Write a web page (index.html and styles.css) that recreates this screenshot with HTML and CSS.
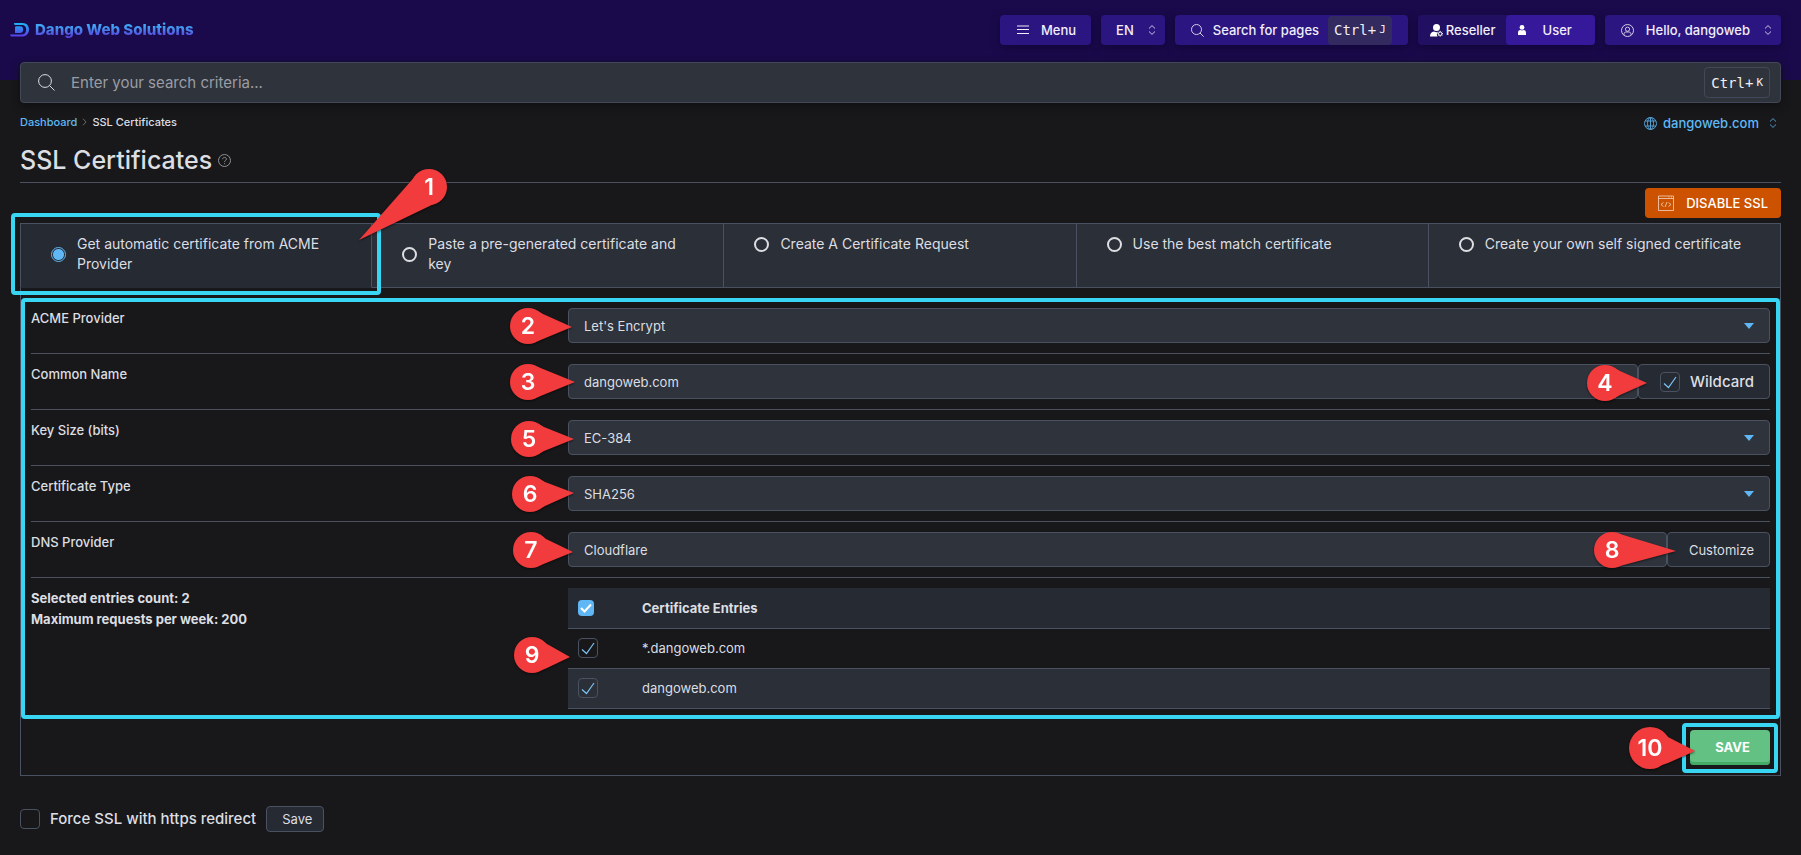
FILE: index.html
```html
<!DOCTYPE html>
<html lang="en">
<head>
<meta charset="utf-8">
<meta name="viewport" content="width=device-width, initial-scale=1">
<title>SSL Certificates</title>
<link rel="stylesheet" href="styles.css">
</head>
<body>
<header class="topbar">
  <a class="brand" href="#">
    <svg class="brand-mark" viewBox="0 0 19 14" aria-hidden="true">
      <defs><linearGradient id="mark" x1="0" y1="0" x2="0" y2="1"><stop offset="0" stop-color="#1cb6f6"/><stop offset="1" stop-color="#5a3de8"/></linearGradient></defs>
      <path fill="url(#mark)" d="M4 0h8.500c4 0 6.500 2.800 6.500 6.400 0 4-2.800 7.100-7 7.100H1L0 11.500h11.500c3 0 4.700-2 4.700-5C16.200 3.800 14.700 2 12 2H4.500zM5.500 3.200H10c2 0 3.200 1.200 3.200 3.200 0 2.300-1.300 3.600-3.400 3.600H5V5z"/>
    </svg>
    <span class="brand-name">Dango Web Solutions</span>
  </a>
  <nav class="tools" aria-label="Account">
    <button class="tool tool-menu" type="button">
      <svg class="icon12" viewBox="0 0 12 12"><path d="M0 2h12M0 5.500h12M0 9.500h12"/></svg>Menu
    </button>
    <button class="tool tool-lang" type="button">EN
      <svg class="updown" viewBox="0 0 8 10"><path d="M1 3.500 4 .6l3 2.900M1 6.500l3 2.900 3-2.900"/></svg>
    </button>
    <button class="tool tool-search" type="button">
      <svg class="icon13" viewBox="0 0 13 13"><circle cx="5.500" cy="5.500" r="5"/><path d="m9 9 3.700 3.700"/></svg>
      Search for pages <kbd class="keys">Ctrl+<small>J</small></kbd>
    </button>
    <div class="roles">
      <button class="role" type="button">
        <svg class="icon13 solid" viewBox="0 0 13 13"><circle cx="6.500" cy="3.500" r="3.500"/><path d="M0 12.500C0 9.500 1.500 8 4 7.600c1.500.8 3 .8 4.200.2-1.600 1.500-1.700 3.200-.7 4.700z"/><circle class="gear" cx="10.200" cy="9.700" r="1.700"/><path class="gear-teeth" d="M10.200 7.900v-1M10.200 12.600v-1M8.400 9.700h-1M13 9.700h-1M8.900 8.400l-.6-.6M12.100 11.600l-.6-.6M8.900 11l-.6.6M12.100 7.800l-.6.6"/></svg>Reseller
      </button>
      <button class="role role-active" type="button">
        <svg class="icon-user" viewBox="0 0 8 10"><circle cx="4" cy="2.400" r="2.400"/><path d="M0 10V8c0-2.400 1.200-3 2.500-3 1 .5 2 .5 3 0C6.800 5 8 5.600 8 8v2z"/></svg>User
      </button>
    </div>
    <button class="tool tool-account" type="button">
      <svg class="icon13" viewBox="0 0 13 13"><circle cx="6.500" cy="6.500" r="6"/><circle cx="6.500" cy="5.200" r="2.100"/><path d="M3 10.800V10c0-1.200 1-2 2.200-2h2.600C9 8 10 8.800 10 10v.8"/></svg>
      Hello, dangoweb
      <svg class="updown" viewBox="0 0 8 10"><path d="M1 3.500 4 .6l3 2.900M1 6.500l3 2.900 3-2.900"/></svg>
    </button>
  </nav>
</header>

<main class="page">
  <form class="search" role="search">
    <svg class="search-icon" viewBox="0 0 17 17" aria-hidden="true"><circle cx="7" cy="7" r="6.400"/><path d="m11.600 11.600 4.900 4.900"/></svg>
    <input class="search-input" type="search" placeholder="Enter your search criteria..." aria-label="Search">
    <kbd class="keys keys-outline">Ctrl+<small>K</small></kbd>
  </form>

  <div class="crumbs">
    <nav class="trail" aria-label="Breadcrumb">
      <a href="#">Dashboard</a>
      <svg class="crumb-sep" viewBox="0 0 5 8"><path d="m1 .7 3 3.300-3 3.300"/></svg>
      <span>SSL Certificates</span>
    </nav>
    <button class="domain" type="button">
      <svg class="icon13" viewBox="0 0 13 13"><circle cx="6.500" cy="6.500" r="6"/><ellipse cx="6.500" cy="6.500" rx="3" ry="6"/><path d="M1.200 4h10.600M1.200 9h10.600M6.500.5v12"/></svg>
      dangoweb.com
      <svg class="updown" viewBox="0 0 8 10"><path d="M1 3.500 4 .6l3 2.900M1 6.500l3 2.900 3-2.900"/></svg>
    </button>
  </div>

  <div class="heading">
    <h1>SSL Certificates</h1>
    <svg class="icon13 help" viewBox="0 0 13 13"><circle cx="6.500" cy="6.500" r="6"/><path d="M4.700 5.200c0-2.400 3.700-2.300 3.700-.1 0 1.400-1.800 1.300-1.800 2.800M6.600 9.200v1"/></svg>
  </div>
  <div class="actions">
    <button class="disable" type="button">
      <svg class="icon-code" viewBox="0 0 16 16"><path d="M.5 1h15v14.500H.5zM.5 3.500h15M10.500 2h1M13 2h1M5.500 7.500l-2.500 2 2.500 2M10.500 7.500l2.500 2-2.500 2M9 7l-2 5"/></svg>DISABLE SSL
    </button>
  </div>

  <form class="certificate">
    <div class="tabs">
      <label class="tab tab-active">
        <input class="radio" type="radio" name="source" checked><span>Get automatic certificate from ACME Provider</span>
        <i class="frame frame-tab"></i>
        <svg class="pin pin-1" viewBox="0 0 36 36"><circle cx="18" cy="18" r="18"/><path d="M7 4-52 71 29 32z"/><text x="18" y="26">1</text></svg>
      </label>
      <label class="tab"><input class="radio" type="radio" name="source"><span>Paste a pre-generated certificate and key</span></label>
      <label class="tab"><input class="radio" type="radio" name="source"><span>Create A Certificate Request</span></label>
      <label class="tab"><input class="radio" type="radio" name="source"><span>Use the best match certificate</span></label>
      <label class="tab"><input class="radio" type="radio" name="source"><span>Create your own self signed certificate</span></label>
    </div>

    <div class="panel">
      <div class="fields">
        <div class="row">
          <label for="provider">ACME Provider</label>
          <div class="field">
            <select class="control" id="provider"><option>Let's Encrypt</option></select>
            <svg class="pin pin-2" viewBox="0 0 36 36"><circle cx="18" cy="18" r="18"/><path d="M27 2.500 33 6 62 19 33 31 27 33.500z"/><text x="18" y="26">2</text></svg>
          </div>
        </div>
        <div class="row">
          <label for="common">Common Name</label>
          <div class="field">
            <input class="control" id="common" type="text" value="dangoweb.com">
            <label class="addon wildcard"><input class="check" type="checkbox" checked>Wildcard</label>
            <svg class="pin pin-2" viewBox="0 0 36 36"><circle cx="18" cy="18" r="18"/><path d="M27 2.500 33 5 65 18 33 31 27 33.500z"/><text x="18" y="26">3</text></svg>
            <svg class="pin pin-4" viewBox="0 0 36 36"><circle cx="18" cy="18" r="18"/><path d="M27 2.500 33 6 60 18 33 30 27 33.500z"/><text x="18" y="26">4</text></svg>
          </div>
        </div>
        <div class="row">
          <label for="size">Key Size (bits)</label>
          <div class="field">
            <select class="control" id="size"><option>EC-384</option></select>
            <svg class="pin pin-5" viewBox="0 0 36 36"><circle cx="18" cy="18" r="18"/><path d="M27 2.500 33 6 63 18 33 30 27 33.500z"/><text x="18" y="26">5</text></svg>
          </div>
        </div>
        <div class="row">
          <label for="type">Certificate Type</label>
          <div class="field">
            <select class="control" id="type"><option>SHA256</option></select>
            <svg class="pin pin-6" viewBox="0 0 36 36"><circle cx="18" cy="18" r="18"/><path d="M27 2.500 33 6 62 17 33 30 27 33.500z"/><text x="18" y="26">6</text></svg>
          </div>
        </div>
        <div class="row">
          <label for="dns">DNS Provider</label>
          <div class="field">
            <input class="control" id="dns" type="text" value="Cloudflare">
            <button class="addon" type="button">Customize</button>
            <svg class="pin pin-7" viewBox="0 0 36 36"><circle cx="18" cy="18" r="18"/><path d="M27 2.500 33 7 60 20 33 31 27 33.500z"/><text x="18" y="26">7</text></svg>
            <svg class="pin pin-8" viewBox="0 0 36 36"><circle cx="18" cy="18" r="18"/><path d="M26 2 82 19 26 34z"/><text x="18" y="26">8</text></svg>
          </div>
        </div>
        <div class="row">
          <div class="counts">
            <p>Selected entries count: 2</p>
            <p>Maximum requests per week: 200</p>
          </div>
          <div class="field">
            <table class="entries">
              <thead><tr><th class="pick"><input class="check-all" type="checkbox" checked aria-label="Select all"></th><th>Certificate Entries</th></tr></thead>
              <tbody>
                <tr><td><input class="check" id="e1" type="checkbox" checked></td><td><label for="e1">*.dangoweb.com</label></td></tr>
                <tr><td><input class="check" id="e2" type="checkbox" checked></td><td><label for="e2">dangoweb.com</label></td></tr>
              </tbody>
            </table>
            <svg class="pin pin-9" viewBox="0 0 36 36"><circle cx="18" cy="18" r="18"/><path d="M27 2.500 33 7 56 20 33 31 27 33.500z"/><text x="18" y="26">9</text></svg>
          </div>
        </div>
        <i class="frame frame-fields"></i>
      </div>
      <div class="submit">
        <div class="submit-box">
          <button class="save" type="submit">SAVE</button>
          <i class="frame frame-save"></i>
          <svg class="pin pin-10" viewBox="0 0 42 42"><circle cx="21" cy="21" r="21"/><path d="M33 4 39 10 66 24 39 36 33 38z"/><text x="21" y="29">10</text></svg>
        </div>
      </div>
    </div>
  </form>

  <form class="force">
    <label class="force-label"><input class="check" type="checkbox">Force SSL with https redirect</label>
    <button class="force-save" type="submit">Save</button>
  </form>
</main>
</body>
</html>
```
FILE: styles.css
```css
:root {
  --bg: #18181a;
  --line: #4a5161;
  --field: #2f333c;
  --raised: #2b2f38;
  --deep: #262a32;
  --text: #dcdee2;
  --blue: #5fb8f5;
  --cyan: #38d6f3;
}

* { box-sizing: border-box; }

body {
  margin: 0;
  background: var(--bg);
  color: var(--text);
  font: 14px/20px Inter, "Open Sans", sans-serif;
}

button, input, select { font: inherit; color: inherit; margin: 0; }
button { cursor: pointer; border: 0; padding: 0; background: none; }
a { color: var(--blue); text-decoration: none; }
p { margin: 0; }

svg { fill: none; stroke: currentColor; flex: none; overflow: visible; }
.icon12 { width: 12px; height: 12px; }
.icon13 { width: 13px; height: 13px; stroke-width: 1; opacity: .85; }
.updown { width: 8px; height: 10px; stroke-width: 1; opacity: .8; }

/* Top bar */
.topbar {
  display: flex;
  justify-content: space-between;
  align-items: flex-start;
  padding: 15px 20px 35px 10px;
  background: #1a0a4b;
}
.brand { display: flex; align-items: center; gap: 6px; height: 30px; }
.brand-mark { width: 19px; height: 14px; stroke: none; }
.brand-name {
  font-size: 15px;
  font-weight: 800;
  background: linear-gradient(#3fa6f5 30%, #5546dc 80%);
  background-clip: text;
  color: transparent;
}
.tools { display: flex; gap: 10px; }
.tool, .roles {
  display: flex;
  align-items: center;
  height: 30px;
  border-radius: 4px;
  color: #f1eefb;
  font-size: 13px;
  font-weight: 500;
  white-space: nowrap;
  box-shadow: 0 3px 8px #12063a;
}
.tool { background: #2b1580; }
.tool-menu { gap: 12px; padding: 0 15px 0 17px; }
.tool-lang { gap: 14px; padding: 0 9px 0 15px; }
.tool-search { gap: 9px; padding: 0 16px 0 16px; }
.tool-account { gap: 12px; padding: 0 9px 0 16px; }
.tool-account .updown { margin-left: 2px; }
.keys {
  display: inline-flex;
  align-items: center;
  gap: 3px;
  height: 29px;
  padding: 0 6px;
  border-radius: 4px;
  background: #332a60;
  color: #f0f0f2;
  font: 14px/20px "DejaVu Sans Mono", monospace;
}
.keys small { font-size: 11px; }
.roles { background: #210f62; }
.role { display: flex; align-items: center; gap: 3px; height: 30px; padding: 0 10px 0 12px; border-radius: 4px; font-weight: 500; }
.role svg { fill: #fff; stroke: none; opacity: 1; }
.role .gear { fill: none; stroke: #fff; }
.role .gear-teeth { stroke: #fff; }
.role-active { gap: 17px; padding: 0 23px 0 12px; background: #36199b; }
.icon-user { width: 8px; height: 10px; }

/* Page */
.page { padding: 0 20px 22px; }
.search {
  display: flex;
  align-items: center;
  height: 41px;
  margin-top: -18px;
  padding: 0 10px 0 17px;
  border: 1px solid #424857;
  border-radius: 4px;
  background: var(--field);
  box-shadow: 0 3px 8px #101012;
}
.search-icon { width: 17px; height: 17px; stroke-width: 1; }
.search-input {
  flex: 1;
  margin-left: 16px;
  padding: 0;
  border: 0;
  outline: 0;
  background: none;
  font-size: 15px;
}
.search-input::placeholder { color: #9a9da4; }
.keys-outline { height: 31px; padding: 0 6px; border: 1px solid #424857; background: none; }

.crumbs { display: flex; justify-content: space-between; align-items: center; height: 20px; margin-top: 10px; }
.trail { display: flex; align-items: center; gap: 5px; padding-bottom: 3px; font-size: 11px; font-weight: 500; }
.crumb-sep { width: 5px; height: 8px; opacity: .4; }
.domain { display: flex; align-items: center; gap: 6px; padding-right: 4px; color: var(--blue); font-size: 13px; font-weight: 500; }
.domain .updown { margin-left: 4px; }

.heading {
  display: flex;
  align-items: center;
  gap: 6px;
  margin-top: 12px;
  padding-bottom: 7px;
  border-bottom: 1px solid var(--line);
}
h1 { margin: 0; font-size: 25px; line-height: 30px; font-weight: 500; }
.help { opacity: .6; }
.actions { display: flex; justify-content: flex-end; margin: 5px 0; }
.disable {
  display: flex;
  align-items: center;
  gap: 12px;
  height: 30px;
  padding: 0 13px;
  border-radius: 4px;
  background: #cc5200;
  color: #fff;
  font-size: 13px;
  font-weight: 500;
}
.icon-code { width: 16px; height: 16px; opacity: .6; }

/* Certificate source */
.tabs { display: grid; grid-template-columns: repeat(5, 1fr); min-height: 65px; }
.tab {
  position: relative;
  display: flex;
  align-items: flex-start;
  padding: 10px 31px 12px 30px;
  border: 1px solid var(--line);
  border-left-width: 0;
  background: var(--raised);
}
.tab span { margin-left: 11px; }
.tab .radio { margin-top: 3px; }
.tab-active { border-left-width: 1px; border-bottom-color: var(--deep); background: var(--deep); }
.tab-active .radio, .tab-active + .tab .radio { margin-top: 13px; }
.radio {
  flex: none;
  appearance: none;
  width: 15px;
  height: 15px;
  border: 2px solid #dcdee2;
  border-radius: 50%;
}
.radio:checked {
  border: 1px solid var(--blue);
  background: radial-gradient(circle, var(--blue) 5px, var(--deep) 6px);
}

/* Form */
.panel { border: 1px solid var(--line); border-top: 0; }
.fields { position: relative; padding: 10px; }
.row {
  display: grid;
  grid-template-columns: 537fr 1202fr;
  padding: 10px 0;
  border-bottom: 1px solid var(--line);
  font-size: 13px;
  font-weight: 500;
}
.row:nth-last-child(2) { border-bottom: 0; padding-bottom: 0; }
.field { position: relative; display: flex; font-weight: 400; }
.control {
  flex: 1;
  min-width: 0;
  height: 35px;
  padding: 0 15px;
  border: 1px solid var(--line);
  border-radius: 4px;
  background: var(--field);
  appearance: none;
}
select.control {
  background: var(--field) url("data:image/svg+xml,%3Csvg xmlns='http://www.w3.org/2000/svg' width='10' height='6'%3E%3Cpath d='M0 0h10L5 6z' fill='%235fb8f5'/%3E%3C/svg%3E") no-repeat right 15px center;
}
.addon {
  display: flex;
  align-items: center;
  height: 35px;
  padding: 0 15px 0 21px;
  border: 1px solid var(--line);
  border-radius: 4px;
  background: var(--deep);
}
.wildcard { gap: 10px; font-size: 15px; font-weight: 500; }
.check, .check-all {
  display: block;
  flex: none;
  appearance: none;
  width: 20px;
  height: 20px;
  border: 1px solid var(--line);
  border-radius: 4px;
}
.check:checked {
  background: url("data:image/svg+xml,%3Csvg xmlns='http://www.w3.org/2000/svg' width='18' height='18'%3E%3Cpath d='M3 10.500l4.500 4L15 4' fill='none' stroke='%237cc4f5' stroke-width='1.200'/%3E%3C/svg%3E") center no-repeat;
}
.check-all {
  width: 16px;
  height: 16px;
  border: 0;
  background: var(--blue) url("data:image/svg+xml,%3Csvg xmlns='http://www.w3.org/2000/svg' width='16' height='16'%3E%3Cpath d='M3 8l3.500 3.500L13 4.500' fill='none' stroke='white' stroke-width='2'/%3E%3C/svg%3E") center no-repeat;
}
.counts { font-weight: 700; line-height: 21px; }

.entries { width: 100%; border-collapse: separate; border-spacing: 0; }
.entries th, .entries td { height: 40px; padding: 0 10px 1px; border-bottom: 1px solid var(--line); text-align: left; }
.entries th { height: 41px; background: var(--deep); }
.entries .pick { width: 64px; }
.entries tbody tr:nth-child(even) { background: var(--raised); }

.submit { display: flex; justify-content: flex-end; padding: 11px 10px 10px; }
.submit-box { position: relative; }
.save {
  display: block;
  width: 80px;
  height: 35px;
  padding: 0 0 2px 5px;
  border-radius: 4px;
  background: #62c183;
  box-shadow: inset 0 -3px #43ab66;
  color: #fff;
  font-size: 13px;
  font-weight: 700;
}

.force { display: flex; align-items: center; gap: 10px; margin-top: 30px; }
.force-label { display: flex; align-items: center; gap: 10px; font-size: 15px; font-weight: 500; }
.force-save {
  height: 26px;
  padding: 0 11px 0 15px;
  border: 1px solid var(--line);
  border-radius: 4px;
  background: var(--deep);
  font-size: 13px;
}

/* Callouts laid over the form */
.frame {
  position: absolute;
  z-index: 1;
  border: 4px solid var(--cyan);
  border-radius: 4px;
  pointer-events: none;
}
.frame-tab { inset: -11px -10px -8px -10px; }
.frame-fields { inset: 10px 0 0 0; }
.frame-save { inset: -7px -8px -8px -8px; }
.pin {
  position: absolute;
  z-index: 2;
  width: 36px;
  height: 36px;
  fill: #f23b3c;
  stroke: none;
  filter: drop-shadow(0 1px 1px #0008);
  pointer-events: none;
}
.pin text { fill: #fff; font: 600 23px Inter, sans-serif; text-anchor: middle; }
.pin-1 { top: -55px; right: -76px; }
.pin-2 { top: 0; left: -58px; }
.pin-4 { top: 1px; right: 147px; }
.pin-5 { top: 1px; left: -57px; }
.pin-6 { top: 0; left: -56px; }
.pin-7 { top: 0; left: -55px; }
.pin-8 { top: 0; right: 140px; }
.pin-9 { top: 49px; left: -54px; }
.pin-10 { top: -3px; left: -61px; width: 42px; height: 42px; }
```
